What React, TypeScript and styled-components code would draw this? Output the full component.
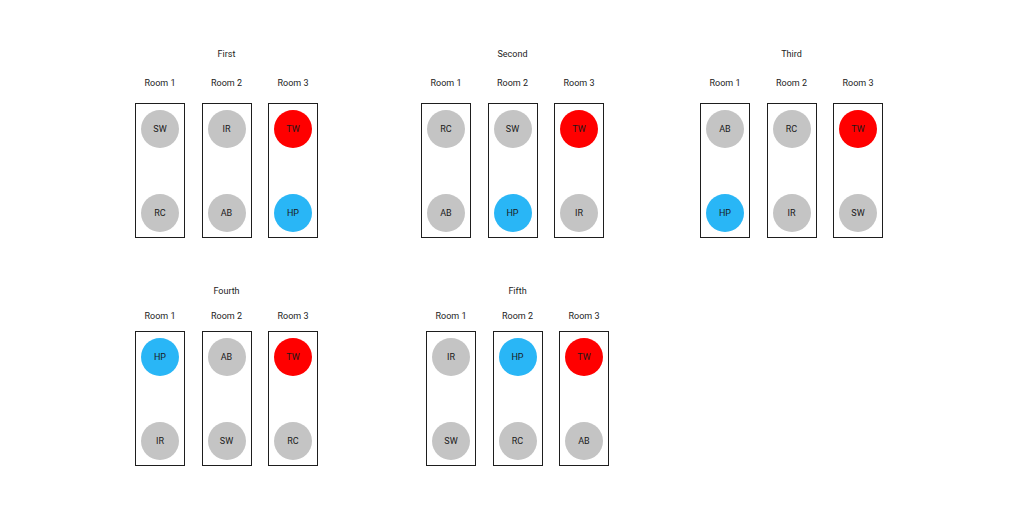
import React from "react"
import styled, { createGlobalStyle } from "styled-components"

type Tone = "grey" | "red" | "blue"

interface Token {
  code: string
  tone: Tone
}

interface Arrangement {
  title: string
  offset: number
  rooms: Token[][]
}

const g = (code: string): Token => ({ code, tone: "grey" })
const TW: Token = { code: "TW", tone: "red" }
const HP: Token = { code: "HP", tone: "blue" }

const rows: { titleGap: number; labelGap: number; top: number; groups: Arrangement[] }[] = [
  {
    top: 48,
    titleGap: 17,
    labelGap: 14,
    groups: [
      { title: "First", offset: 135, rooms: [[g("SW"), g("RC")], [g("IR"), g("AB")], [TW, HP]] },
      { title: "Second", offset: 103, rooms: [[g("RC"), g("AB")], [g("SW"), HP], [TW, g("IR")]] },
      { title: "Third", offset: 96, rooms: [[g("AB"), HP], [g("RC"), g("IR")], [TW, g("SW")]] },
    ],
  },
  {
    top: 47,
    titleGap: 13,
    labelGap: 9,
    groups: [
      { title: "Fourth", offset: 135, rooms: [[HP, g("IR")], [g("AB"), g("SW")], [TW, g("RC")]] },
      { title: "Fifth", offset: 108, rooms: [[g("IR"), g("SW")], [HP, g("RC")], [TW, g("AB")]] },
    ],
  },
]

const toneColors: Record<Tone, string> = {
  grey: "#c4c4c4",
  red: "#ff0000",
  blue: "#29b6f6",
}

const GlobalStyle = createGlobalStyle`
  html, body {
    margin: 0;
    padding: 0;
    background: #ffffff;
  }
  body {
    font-family: Roboto, "Liberation Sans", sans-serif;
    color: #1c1c1c;
  }
`

const Page = styled.div`
  width: 1024px;
  height: 521px;
  display: flex;
  flex-direction: column;
  overflow: hidden;
`

const Row = styled.div<{ $top: number }>`
  display: flex;
  align-items: flex-start;
  margin-top: ${p => p.$top}px;
`

const Group = styled.div<{ $offset: number; $titleGap: number; $labelGap: number }>`
  display: flex;
  flex-direction: column;
  align-items: center;
  margin-left: ${p => p.$offset}px;
  width: 183px;

  & > div:nth-child(2) {
    margin-top: ${p => p.$titleGap}px;
  }
  & > div:nth-child(3) {
    margin-top: ${p => p.$labelGap}px;
  }
`

const Title = styled.div`
  font-size: 9px;
  line-height: 12px;
  height: 12px;
`

const Columns = styled.div`
  display: flex;
  gap: 16.5px;
  width: 100%;
`

const Label = styled.span`
  width: 50px;
  text-align: center;
  font-size: 9px;
  line-height: 12px;
`

const Room = styled.div`
  box-sizing: border-box;
  width: 50px;
  height: 135px;
  border: 1.2px solid #1e1e1e;
  display: flex;
  flex-direction: column;
  justify-content: space-between;
  align-items: center;
  padding: 6px 0 5px;
`

const Disc = styled.div<{ $tone: Tone }>`
  width: 38px;
  height: 38px;
  border-radius: 50%;
  background: ${p => toneColors[p.$tone]};
  display: flex;
  align-items: center;
  justify-content: center;
  font-size: 9px;
  color: #1a1a1a;
`

export default function App() {
  return (
    <>
      <GlobalStyle />
      <Page>
        {rows.map((row, ri) => (
          <Row key={ri} $top={row.top}>
            {row.groups.map(group => (
              <Group
                key={group.title}
                $offset={group.offset}
                $titleGap={row.titleGap}
                $labelGap={row.labelGap}
              >
                <Title>{group.title}</Title>
                <Columns>
                  {group.rooms.map((_, i) => (
                    <Label key={i}>Room {i + 1}</Label>
                  ))}
                </Columns>
                <Columns>
                  {group.rooms.map((tokens, i) => (
                    <Room key={i}>
                      {tokens.map(t => (
                        <Disc key={t.code} $tone={t.tone}>
                          {t.code}
                        </Disc>
                      ))}
                    </Room>
                  ))}
                </Columns>
              </Group>
            ))}
          </Row>
        ))}
      </Page>
    </>
  )
}
